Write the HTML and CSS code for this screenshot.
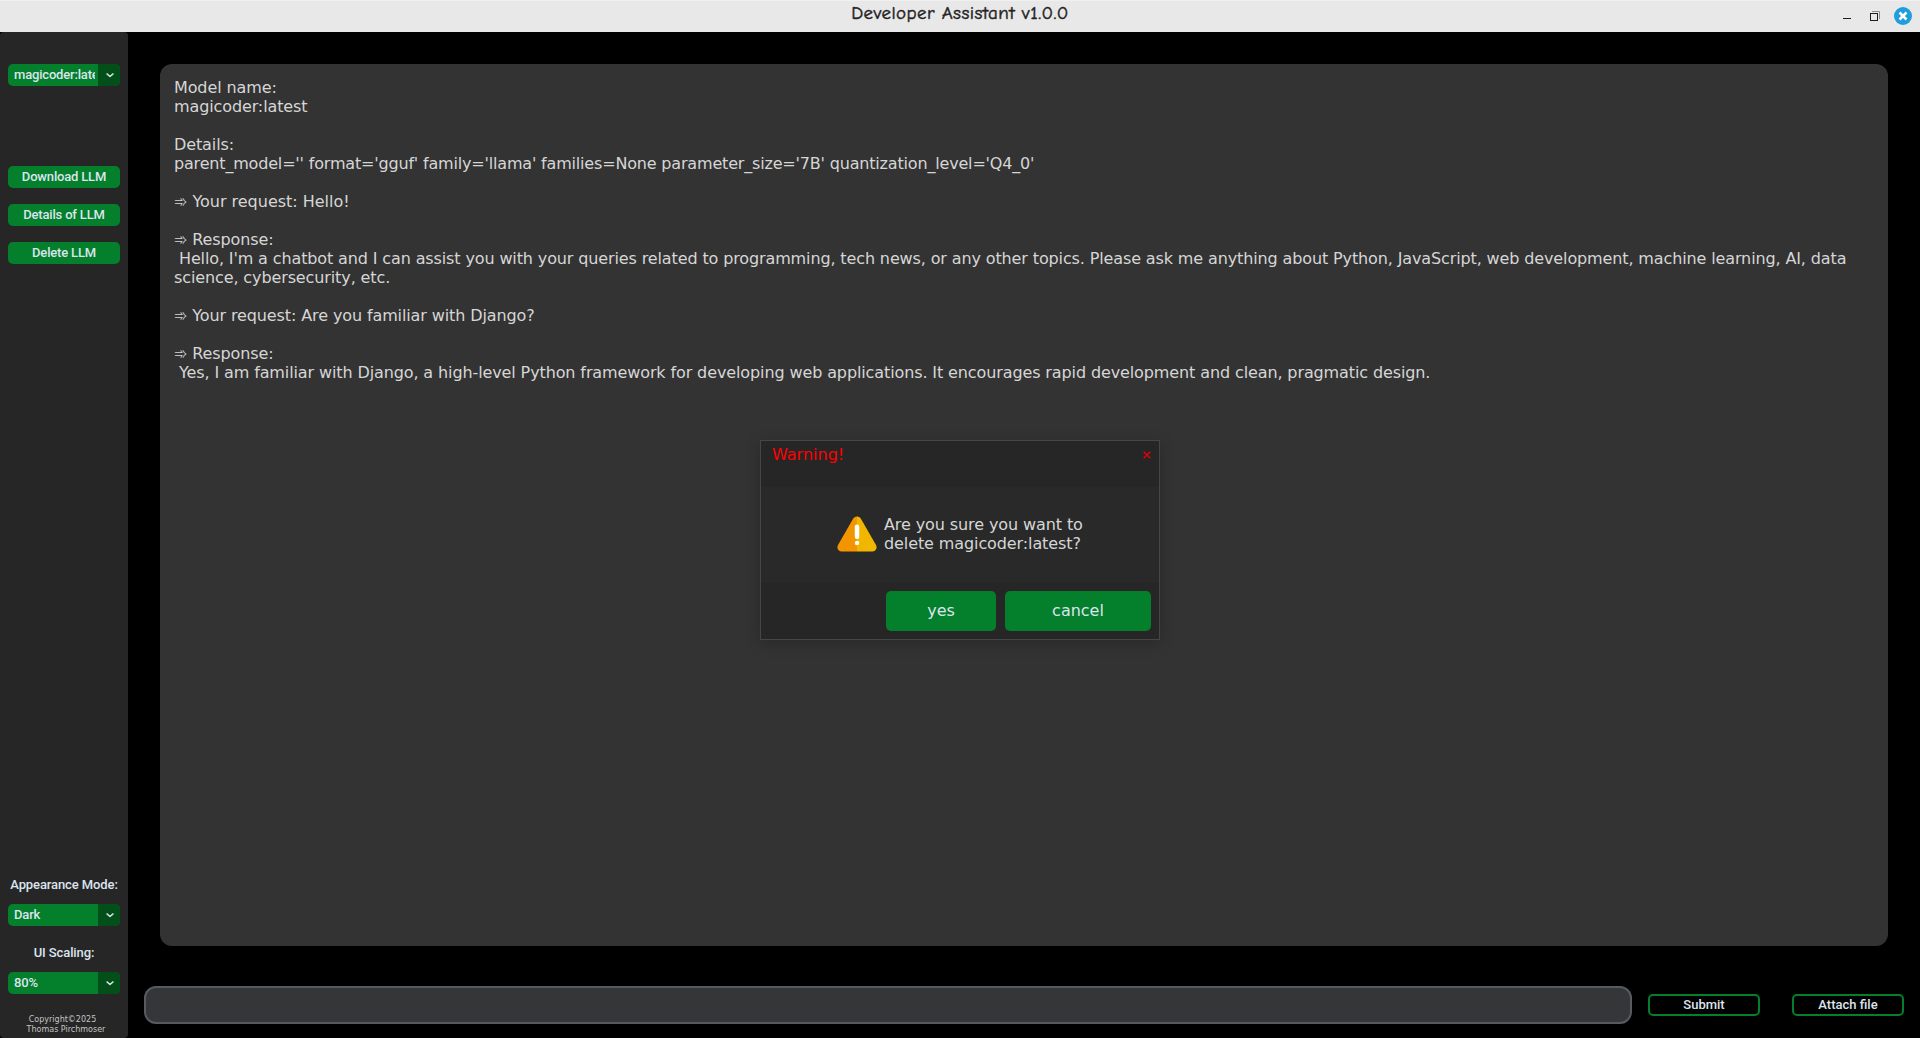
FILE: index.html
```html
<!DOCTYPE html>
<html lang="en">
<head>
<meta charset="utf-8">
<title>Developer Assistant v1.0.0</title>
<link rel="stylesheet" href="styles.css">
</head>
<body>
<header class="titlebar">
  <h1 class="title">Developer Assistant v1.0.0</h1>
  <div class="controls">
    <svg width="72" height="20" viewBox="0 0 72 20">
      <path d="M3 12.5h8" stroke="#1c1c1c" stroke-width="1" fill="none"/>
      <path d="M32 5.5h7.500v7.500" stroke="#8c8c8c" fill="none"/>
      <rect x="30.500" y="7.500" width="7" height="7" stroke="#1c1c1c" fill="#e8e8e8"/>
      <circle cx="63" cy="10" r="9" fill="#1f9ede"/>
      <path d="M59.500 6.500l7 7M66.500 6.500l-7 7" stroke="#fff" stroke-width="2.500"/>
    </svg>
  </div>
</header>
<div class="app">
  <aside class="sidebar">
    <div class="select"><span class="value">magicoder:latest</span><span class="arrow"><svg width="8" height="5" viewBox="0 0 8 5"><path d="M1 .9l3 2.600 3-2.600"/></svg></span></div>
    <nav class="actions">
      <button class="btn">Download LLM</button>
      <button class="btn">Details of LLM</button>
      <button class="btn">Delete LLM</button>
    </nav>
    <div class="settings">
      <label class="label">Appearance Mode:</label>
      <div class="select"><span class="value">Dark</span><span class="arrow"><svg width="8" height="5" viewBox="0 0 8 5"><path d="M1 .9l3 2.600 3-2.600"/></svg></span></div>
      <label class="label">UI Scaling:</label>
      <div class="select"><span class="value">80%</span><span class="arrow"><svg width="8" height="5" viewBox="0 0 8 5"><path d="M1 .9l3 2.600 3-2.600"/></svg></span></div>
    </div>
    <footer class="copyright"><span class="year">Copyright©2025</span><span>Thomas Pirchmoser</span></footer>
  </aside>
  <main class="main">
    <div class="chat">Model name:
magicoder:latest

Details:
<span class="details">parent_model='' format='gguf' family='llama' families=None parameter_size='7B' quantization_level='Q4_0'</span>

<span class="prompt">➾ Your request: Hello!</span>

➾ Response:
<span class="reply"> Hello, I'm a chatbot and I can assist you with your queries related to programming, tech news, or any other topics. Please ask me anything about Python, JavaScript, web development, machine learning, AI, data </span>science, cybersecurity, etc.

➾ Your request: Are you familiar with Django?

➾ Response:
 Yes, I am familiar with Django, a high-level Python framework for developing web applications. It encourages rapid development and clean, pragmatic design.</div>
    <div class="composer">
      <div class="entry"></div>
      <button class="outline submit">Submit</button>
      <button class="outline">Attach file</button>
    </div>
  </main>
</div>
<section class="dialog">
  <div class="dialog-head"><span>Warning!</span><svg width="8" height="8" viewBox="0 0 8 8"><path d="M.7 .7l6.600 6.600M7.300 .7l-6.600 6.600"/></svg></div>
  <div class="dialog-body">
    <svg width="40" height="36" viewBox="0 0 40 36">
      <path d="M20 .5c-2 0-3.200 1-4.200 2.700L1.300 28.500C-.8 32.300 1 35.500 5 35.500h15z" fill="#f39500"/>
      <path d="M20 .5c2 0 3.200 1 4.200 2.700l14.500 25.300c2.100 3.800.3 7-3.700 7H20z" fill="#f1b600"/>
      <rect x="17.800" y="8.500" width="4.400" height="14.500" rx="2" fill="#fff"/>
      <circle cx="20" cy="27" r="2.200" fill="#fff"/>
    </svg>
    <p class="question">Are you sure you want to<br>delete magicoder:latest?</p>
  </div>
  <div class="dialog-foot"><button class="dbtn yes">yes</button><button class="dbtn cancel">cancel</button></div>
</section>
</body>
</html>
```
FILE: styles.css
```css
* { box-sizing: border-box; }
body { margin: 0; height: 1038px; overflow: hidden; display: flex; flex-direction: column; background: #000; font-family: Roboto, sans-serif; font-size: 13px; color: #dce4ee; }
button { font: inherit; color: inherit; border: 0; margin: 0; padding: 0; letter-spacing: inherit; }
.titlebar { height: 32px; flex: none; display: grid; grid-template-columns: 1fr auto 1fr; background: #e8e8e8; border-top: 1px solid #f0f0f0; }
.title { grid-column: 2; margin: 0; font: 500 19px/24px "Comic Neue", "Comic Sans MS", cursive; letter-spacing: .42px; color: #222; -webkit-text-stroke: .45px #222; white-space: nowrap; }
.controls { grid-column: 3; justify-self: end; padding: 5px 8px 0 0; }
.controls svg { display: block; }
.app { flex: 1; display: flex; min-height: 0; }
.sidebar { width: 128px; padding: 32px 8px 0; background: #262626; border-radius: 4px; display: flex; flex-direction: column; font-weight: 500; letter-spacing: -.18px; }
.select { height: 22px; display: flex; border-radius: 5px; overflow: hidden; flex: none; background: #047f2b; }
.value { width: 87px; margin-right: 3px; padding-left: 6px; overflow: hidden; white-space: nowrap; line-height: 22px; flex: none; }
.arrow { width: 22px; padding-left: 1px; background: #034f1a; display: grid; place-items: center; }
.arrow path { fill: none; stroke: #dce4ee; stroke-width: 1.4; stroke-linecap: round; stroke-linejoin: round; }
.actions { margin-top: 80px; display: flex; flex-direction: column; gap: 16px; }
.btn { height: 22px; border-radius: 5px; background: #047f2b; line-height: 22px; }
.settings { margin-top: auto; display: flex; flex-direction: column; }
.label { text-align: center; line-height: 22px; height: 30px; letter-spacing: -.1px; white-space: nowrap; }
.settings .select + .label { margin-top: 16px; }
.copyright { height: 44px; padding: 21px 0 0 4px; display: flex; flex-direction: column; align-items: center; font: 8px/10px "DejaVu Sans", sans-serif; letter-spacing: 0; color: #c4c4c4; white-space: nowrap; }
.year { margin-right: 7px; }
.main { flex: 1; min-width: 0; padding: 32px 16px 14px; display: flex; flex-direction: column; }
.chat { height: 882px; margin: 0 16px; padding: 14px; border-radius: 12px; background: #333; font: 16px/19px "DejaVu Sans", sans-serif; letter-spacing: -.112px; color: #d6d6d6; white-space: pre-wrap; }
.details { letter-spacing: -.178px; }
.prompt { letter-spacing: -.02px; }
.reply { letter-spacing: -.124px; }
.composer { margin-top: auto; display: flex; align-items: center; }
.entry { flex: 1; height: 38px; margin-right: 16px; border: 2px solid #565b5e; border-radius: 12px; background: #343638; }
.outline { width: 112px; height: 22px; border: 2px solid #047f2b; border-radius: 5px; background: #000; line-height: 18px; font-weight: 500; }
.submit { margin-right: 32px; }
.dialog { position: absolute; left: 760px; top: 440px; width: 400px; height: 200px; border: 1px solid #464646; background: #292929; box-shadow: 0 3px 14px rgba(0,0,0,.22); display: flex; flex-direction: column; font: 16px/19px "DejaVu Sans", sans-serif; color: #d6d6d6; }
.dialog-head { height: 46px; padding: 4px 8px 0 11px; background: #262626; color: #f00; display: flex; justify-content: space-between; }
.dialog-head svg { margin-top: 6px; }
.dialog-head path { stroke: #e8000b; stroke-width: 1.3; }
.dialog-body { height: 96px; padding: 0 0 3px 76px; display: flex; align-items: center; }
.question { margin: 0 0 0 7px; letter-spacing: -.1px; }
.dialog-foot { flex: 1; padding: 8px 8px 0 0; background: #262626; display: flex; justify-content: flex-end; gap: 9px; }
.dbtn { height: 40px; padding-bottom: 2px; border-radius: 5px; background: #047f2b; color: #dce4ee; }
.yes { width: 110px; }
.cancel { width: 146px; }
```
